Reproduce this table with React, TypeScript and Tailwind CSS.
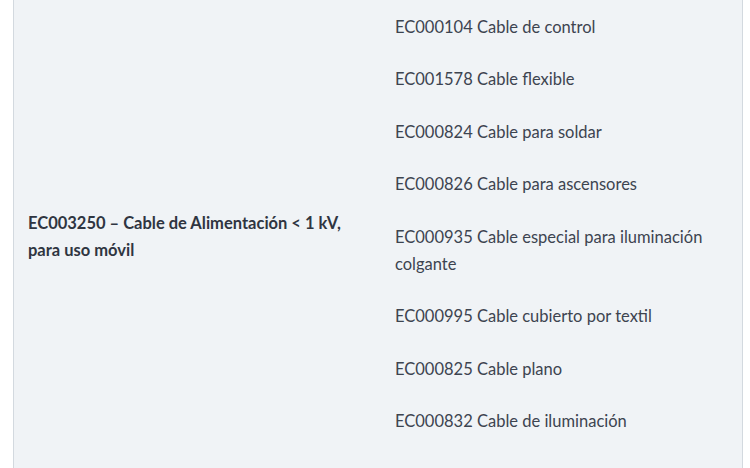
import React from 'react';

const items: string[] = [
  'EC000104 Cable de control',
  'EC001578 Cable flexible',
  'EC000824 Cable para soldar',
  'EC000826 Cable para ascensores',
  'EC000935 Cable especial para iluminación colgante',
  'EC000995 Cable cubierto por textil',
  'EC000825 Cable plano',
  'EC000832 Cable de iluminación',
];

export default function App() {
  return (
    <div className="w-[750px] h-[468px] overflow-hidden bg-white" style={{ fontFamily: 'Lato, "Noto Sans", sans-serif' }}>
      <div className="ml-[13px] w-[730px] grid grid-cols-[367px_1fr] bg-[#f0f3f6] border-x border-[#d3d9df]">
        {/* Class */}
        <div className="flex items-center pl-[14px] pr-3 pt-[2px]">
          <p className="text-[16.5px] leading-[27px] font-bold text-[#2f3541]">
            EC003250 – Cable de Alimentación &lt; 1 kV, para uso móvil
          </p>
        </div>

        {/* Related classes */}
        <div className="pl-[14px] pr-4 pt-[13.5px] pb-[37px]">
          {items.map((item) => (
            <p key={item} className="text-[16.5px] leading-[27px] text-[#3d4450] mb-[25.5px] last:mb-0">
              {item}
            </p>
          ))}
        </div>
      </div>
    </div>
  );
}
